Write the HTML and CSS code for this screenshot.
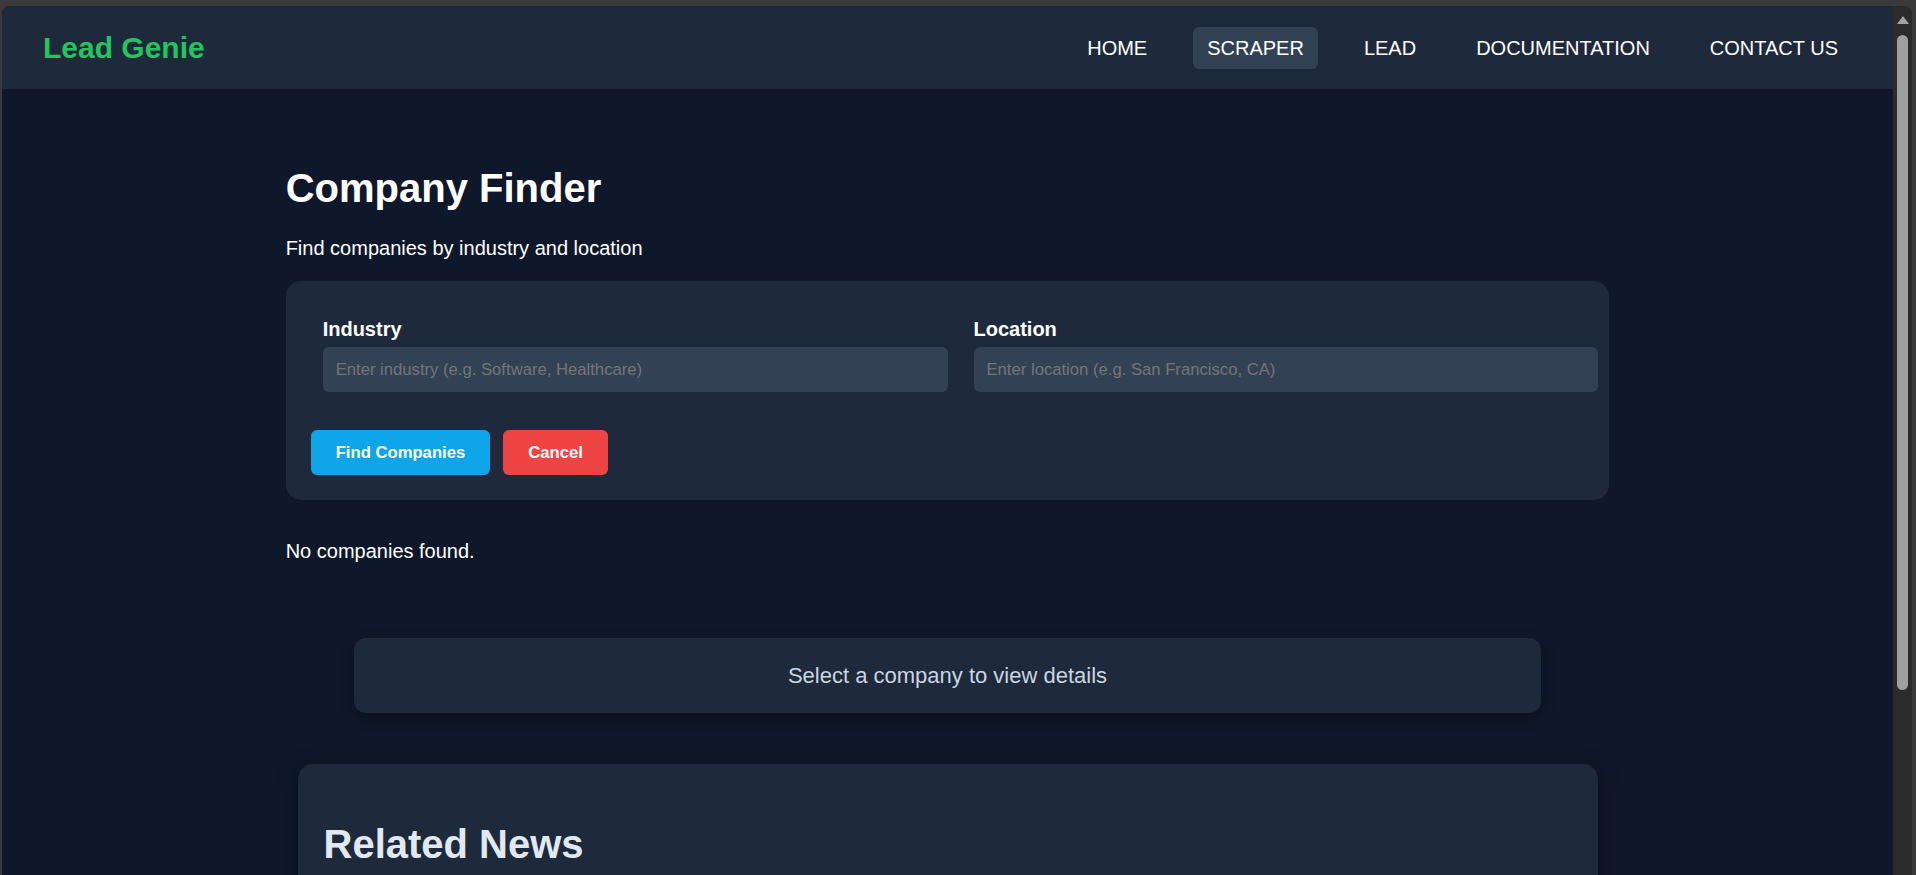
FILE: index.html
```html
<!DOCTYPE html>
<html lang="en">
<head>
<meta charset="utf-8">
<title>Lead Genie - Company Finder</title>
<link rel="stylesheet" href="styles.css">
</head>
<body>
<div class="window">
  <div class="page">
    <header class="navbar">
      <div class="logo">Lead Genie</div>
      <nav class="nav-links">
        <a class="nav-link" href="#">HOME</a>
        <a class="nav-link active" href="#">SCRAPER</a>
        <a class="nav-link" href="#">LEAD</a>
        <a class="nav-link" href="#">DOCUMENTATION</a>
        <a class="nav-link" href="#">CONTACT US</a>
      </nav>
    </header>
    <main class="container">
      <h1 class="title">Company Finder</h1>
      <p class="subtitle">Find companies by industry and location</p>
      <form class="search-card">
        <div class="fields">
          <div class="field">
            <label class="field-label">Industry</label>
            <input class="field-input" type="text" placeholder="Enter industry (e.g. Software, Healthcare)">
          </div>
          <div class="field">
            <label class="field-label">Location</label>
            <input class="field-input" type="text" placeholder="Enter location (e.g. San Francisco, CA)">
          </div>
        </div>
        <div class="actions">
          <button class="btn btn-primary" type="button">Find Companies</button>
          <button class="btn btn-danger" type="button">Cancel</button>
        </div>
      </form>
      <p class="empty">No companies found.</p>
      <div class="details">Select a company to view details</div>
      <section class="news">
        <h2 class="news-title">Related News</h2>
      </section>
    </main>
  </div>
  <div class="scrollbar">
    <div class="scroll-arrow"></div>
    <div class="scroll-thumb"></div>
  </div>
</div>
</body>
</html>
```
FILE: styles.css
```css
* { box-sizing: border-box; }

html, body { height: 100%; }

body {
  margin: 0;
  height: 100vh;
  overflow: hidden;
  background: #3a3a3a;
  padding: 6px 4px 0 2px;
  display: flex;
  font-family: "Liberation Sans", Arial, sans-serif;
  color: #ffffff;
}

.window {
  flex: 1;
  display: flex;
  border-radius: 8px 8px 0 0;
  overflow: hidden;
}

.page {
  flex: 1;
  min-width: 0;
  background: #0f172a;
  overflow: hidden;
}

/* Navbar */
.navbar {
  height: 83px;
  background: #1e293b;
  display: flex;
  align-items: center;
  justify-content: space-between;
  padding: 0 41px;
}

.logo {
  font-size: 30px;
  font-weight: bold;
  color: #22c55e;
  line-height: 34px;
}

.nav-links {
  display: flex;
  gap: 32px;
}

.nav-link {
  font-size: 20px;
  line-height: 22px;
  padding: 10px 14px;
  color: #ffffff;
  text-decoration: none;
  border-radius: 6px;
}

.nav-link.active {
  background: #334155;
}

/* Main */
.container {
  width: 70%;
  margin: 0 auto;
  padding-top: 76px;
}

.title {
  font-size: 40px;
  line-height: 46px;
  font-weight: bold;
  margin: 0 0 26px;
}

.subtitle {
  font-size: 20px;
  line-height: 23px;
  margin: 0 0 21px;
}

.search-card {
  background: #1e293b;
  border-radius: 15px;
  padding: 25px;
  margin: 0;
}

.fields {
  display: grid;
  grid-template-columns: 1fr 1fr;
  gap: 26px;
  margin: 12px -14px 0 12px;
}

.field-label {
  display: block;
  font-size: 20px;
  line-height: 23px;
  font-weight: bold;
  margin-bottom: 6px;
}

.field-input {
  display: block;
  width: 100%;
  height: 45px;
  background: #334155;
  border: none;
  border-radius: 6px;
  padding: 0 13px;
  font-family: "Liberation Sans", Arial, sans-serif;
  font-size: 16.67px;
  color: #ffffff;
  outline: none;
}

.field-input::placeholder {
  color: #757575;
}

.actions {
  display: flex;
  gap: 13px;
  margin-top: 38px;
}

.btn {
  height: 45px;
  padding: 0 25px;
  border: none;
  border-radius: 6px;
  font-family: "Liberation Sans", Arial, sans-serif;
  font-size: 16.67px;
  font-weight: bold;
  color: #ffffff;
}

.btn-primary { background: #0ea5e9; }
.btn-danger { background: #ef4444; }

.empty {
  font-size: 20px;
  line-height: 23px;
  margin: 40px 0 0;
}

.details {
  width: 1187px;
  height: 75px;
  margin: 75px auto 0;
  background: #1e293b;
  border-radius: 12px;
  display: flex;
  align-items: center;
  justify-content: center;
  font-size: 22px;
  color: #cbd5e1;
  box-shadow: 0 4px 14px rgba(0, 0, 0, 0.3);
}

.news {
  width: 1300px;
  margin: 51px auto 0;
  min-height: 400px;
  background: #1e293b;
  border-radius: 15px;
  padding: 25px 26px;
  box-shadow: 0 6px 22px rgba(0, 0, 0, 0.35);
}

.news-title {
  font-size: 40px;
  line-height: 46px;
  font-weight: bold;
  color: #e2e8f0;
  margin: 32px 0 0;
}

/* Fake scrollbar */
.scrollbar {
  width: 19px;
  background: #2b2b2b;
  display: flex;
  flex-direction: column;
  align-items: center;
  padding-top: 10px;
}

.scroll-arrow {
  width: 0;
  height: 0;
  border-left: 6px solid transparent;
  border-right: 6px solid transparent;
  border-bottom: 8px solid #a3a3a3;
}

.scroll-thumb {
  width: 11px;
  height: 655px;
  margin-top: 11px;
  background: #9f9f9f;
  border-radius: 6px;
}
```
